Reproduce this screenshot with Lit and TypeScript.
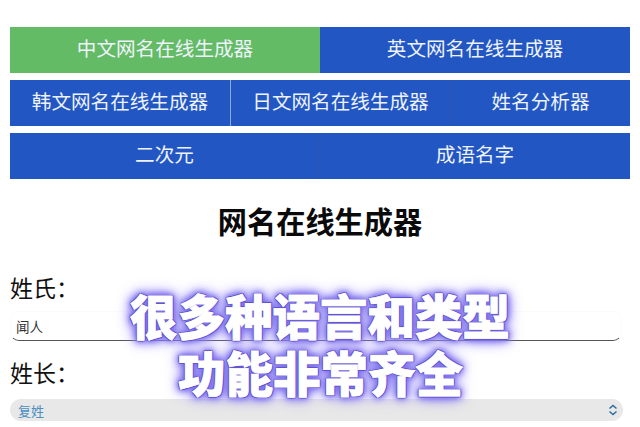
import { LitElement, html, css } from "lit";
import { customElement } from "lit/decorators.js";

@customElement("app-root")
export class AppRoot extends LitElement {
  static styles = css`
    :host {
      display: block;
      position: relative;
      width: 640px;
      height: 427px;
      overflow: hidden;
      background: #fff;
      font-family: "Liberation Sans", "Noto Sans CJK SC", sans-serif;
      color: #111;
    }
    .page {
      display: flex;
      flex-direction: column;
      padding: 27px 10px 0;
    }
    .nav {
      display: flex;
      flex-direction: column;
      gap: 7px;
    }
    .row {
      display: flex;
      height: 46px;
    }
    .btn {
      display: flex;
      align-items: center;
      justify-content: center;
      background: #2256c3;
      color: #eef3fb;
      font-size: 19.6px;
      line-height: 1;
    }
    .btn.on {
      background: #64bb66;
    }
    .half {
      flex: 0 0 310px;
    }
    .first {
      flex: 0 0 221px;
      border-right: 1px solid #8ea8de;
      box-sizing: border-box;
    }
    .second {
      flex: 0 0 220px;
      border-right: 1px solid #2a55ae;
      box-sizing: border-box;
    }
    .w1 {
      flex: 1;
    }
    .edge {
      border-right: 1px solid #2a55ae;
      box-sizing: border-box;
    }
    h1 {
      margin: 27px 0 0;
      height: 35px;
      font-size: 29.2px;
      line-height: 35px;
      font-weight: 700;
      text-align: center;
      color: #0a0a0a;
    }
    .label {
      font-size: 23px;
      line-height: 30px;
      color: #111;
    }
    .l1 {
      margin-top: 33px;
    }
    .l2 {
      margin-top: 18px;
    }
    .input {
      margin-top: 7px;
      width: 612px;
      height: 30px;
      box-sizing: border-box;
      padding-left: 5px;
      display: flex;
      align-items: center;
      font-size: 13.5px;
      color: #333;
      border: 1px solid #fbfbfb;
      border-bottom: 1.5px solid #555;
      border-radius: 9px;
    }
    .select {
      margin-top: 10px;
      width: 613px;
      height: 22px;
      box-sizing: border-box;
      padding: 0 5px 0 8px;
      display: flex;
      align-items: center;
      justify-content: space-between;
      background: #e8e8e8;
      border-radius: 11px;
      font-size: 13px;
      color: #4a8fc0;
    }
    .select svg {
      display: block;
    }
    .overlay {
      position: absolute;
      left: 0;
      top: 287px;
      width: 640px;
      text-align: center;
      font-family: "Noto Sans CJK SC", sans-serif;
      font-weight: 900;
      font-size: 47.5px;
      line-height: 56px;
      color: #fff;
      -webkit-text-stroke: 0.9px #fff;
      text-shadow:
        1.3px 0 0 #5f52d0,
        -1.3px 0 0 #5f52d0,
        0 1.3px 0 #5f52d0,
        0 -1.3px 0 #5f52d0,
        1px 1px 0 #5f52d0,
        -1px -1px 0 #5f52d0,
        1px -1px 0 #5f52d0,
        -1px 1px 0 #5f52d0,
        0 0 4px #7f70ee,
        0 0 6px #7f70ee,
        0 0 8px #8577ee,
        0 0 10px #8577ee,
        0 0 14px #9488f2,
        0 0 18px #a59bf5;
    }
    .overlay div:last-child {
      margin-top: 1px;
      margin-left: 1px;
    }
  `;

  render() {
    return html`
      <div class="page">
        <div class="nav">
          <div class="row">
            <div class="btn on half">中文网名在线生成器</div>
            <div class="btn half">英文网名在线生成器</div>
          </div>
          <div class="row">
            <div class="btn first">韩文网名在线生成器</div>
            <div class="btn second">日文网名在线生成器</div>
            <div class="btn w1">姓名分析器</div>
          </div>
          <div class="row">
            <div class="btn half edge">二次元</div>
            <div class="btn half">成语名字</div>
          </div>
        </div>
        <h1>网名在线生成器</h1>
        <div class="label l1">姓氏：</div>
        <div class="input">闻人</div>
        <div class="label l2">姓长：</div>
        <div class="select">
          <span>复姓</span>
          <svg width="10" height="12" viewBox="0 0 10 12" fill="none" stroke="#2f6f9f" stroke-width="1.6">
            <path d="M1.5 4.5 5 1.5 8.5 4.5" />
            <path d="M1.5 7.5 5 10.5 8.5 7.5" />
          </svg>
        </div>
      </div>
      <div class="overlay">
        <div>很多种语言和类型</div>
        <div>功能非常齐全</div>
      </div>
    `;
  }
}
